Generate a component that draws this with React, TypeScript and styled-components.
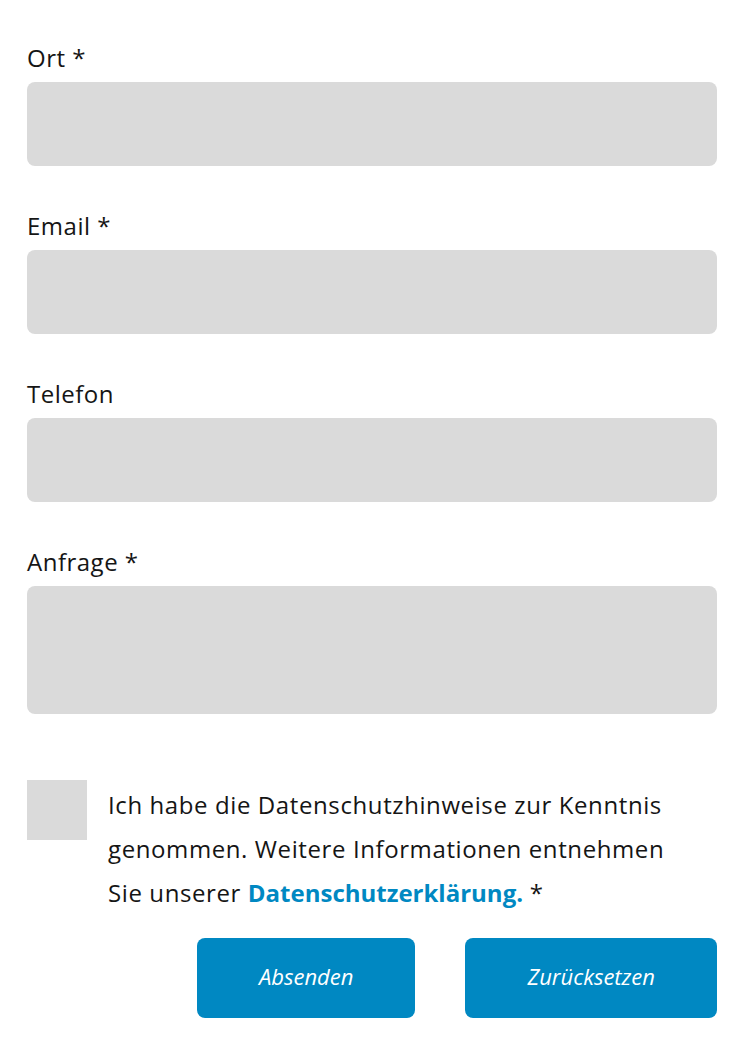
import React from 'react';
import styled, {createGlobalStyle} from 'styled-components';

const GlobalStyle = createGlobalStyle`
  html, body {
    margin: 0;
    padding: 0;
    background: #ffffff;
  }
  body {
    font-family: 'Open Sans', 'Noto Sans', sans-serif;
    color: #151515;
  }
`;

type FieldProps = {
  label: string;
  required?: boolean;
  multiline?: boolean;
};

const Field: React.FC<FieldProps> = props => {
  return (
    <FieldWrapper>
      <Label>
        {props.label}
        {props.required && ' *'}
      </Label>
      {props.multiline ? <TextArea /> : <Input type="text" />}
    </FieldWrapper>
  );
};

const App: React.FC = () => {
  return (
    <>
      <GlobalStyle />
      <Form onSubmit={e => e.preventDefault()}>
        <Field label="Ort" required />
        <Field label="Email" required />
        <Field label="Telefon" />
        <Field label="Anfrage" required multiline />

        <ConsentRow>
          <CheckBox type="checkbox" />
          <ConsentText>
            Ich habe die Datenschutzhinweise zur Kenntnis genommen. Weitere
            Informationen entnehmen Sie unserer{' '}
            <PolicyLink href="#">Datenschutzerklärung.</PolicyLink> *
          </ConsentText>
        </ConsentRow>

        <Actions>
          <Button type="submit">Absenden</Button>
          <Button type="reset">Zurücksetzen</Button>
        </Actions>
      </Form>
    </>
  );
};

export default App;

const Form = styled.form`
  display: flex;
  flex-direction: column;
  width: 690px;
  padding: 42px 27px 34px;
`;

const FieldWrapper = styled.div`
  display: flex;
  flex-direction: column;
  gap: 8px;
  margin-bottom: 44px;
`;

const Label = styled.label`
  font-size: 24px;
  line-height: 32px;
  letter-spacing: 0.5px;
`;

const Input = styled.input`
  box-sizing: border-box;
  width: 100%;
  height: 84px;
  border: none;
  border-radius: 8px;
  background: #dadada;
  outline: none;
  padding: 0 16px;
  font: inherit;
`;

const TextArea = styled.textarea`
  box-sizing: border-box;
  width: 100%;
  height: 128px;
  border: none;
  border-radius: 8px;
  background: #dadada;
  outline: none;
  resize: none;
  padding: 16px;
  font: inherit;
`;

const ConsentRow = styled.div`
  display: flex;
  align-items: flex-start;
  gap: 21px;
  margin-top: 22px;
`;

const CheckBox = styled.input`
  appearance: none;
  flex: 0 0 60px;
  width: 60px;
  height: 60px;
  margin: 0;
  background: #dadada;
  border: none;
  border-radius: 0;
`;

const ConsentText = styled.p`
  margin: 3px 0 0;
  font-size: 24px;
  line-height: 44px;
  letter-spacing: 0.6px;
  width: 590px;
`;

const PolicyLink = styled.a`
  color: #0088c2;
  font-weight: 700;
  letter-spacing: 0;
  text-decoration: none;
`;

const Actions = styled.div`
  display: flex;
  justify-content: flex-end;
  gap: 50px;
  margin-top: 23px;
`;

const Button = styled.button`
  height: 80px;
  padding: 0 62px 4px;
  border: none;
  border-radius: 8px;
  background: #0088c2;
  color: #ffffff;
  font-family: 'Open Sans', 'Noto Sans', sans-serif;
  font-size: 22px;
  font-style: italic;
  cursor: pointer;
`;
